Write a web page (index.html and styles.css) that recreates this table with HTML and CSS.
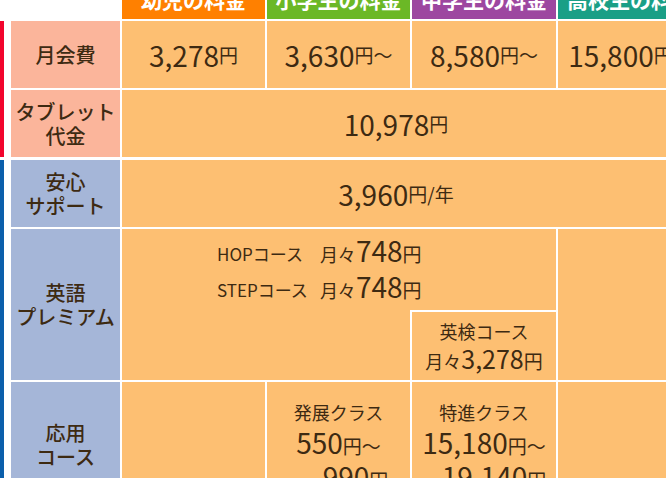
FILE: index.html
```html
<!DOCTYPE html>
<html lang="ja">
<head>
<meta charset="utf-8">
<link rel="stylesheet" href="styles.css">
</head>
<body>
<div class="sheet">
  <div class="head">
    <div class="hcell blank"></div>
    <div class="hcell h-orange">幼児の料金</div>
    <div class="hcell h-green">小学生の料金</div>
    <div class="hcell h-purple">中学生の料金</div>
    <div class="hcell h-teal">高校生の料金</div>
  </div>

  <div class="group">
    <div class="bar bar-red"></div>
    <div class="grid grid-a">
      <div class="label pink">月会費</div>
      <div class="cell"><span class="num">3,278</span><span class="yen">円</span></div>
      <div class="cell"><span class="num">3,630</span><span class="yen">円～</span></div>
      <div class="cell"><span class="num">8,580</span><span class="yen">円～</span></div>
      <div class="cell"><span class="num">15,800</span><span class="yen">円～</span></div>

      <div class="label pink">タブレット<br>代金</div>
      <div class="cell span-all"><span class="num">10,978</span><span class="yen">円</span></div>
    </div>
  </div>

  <div class="group group-b">
    <div class="bar bar-blue"></div>
    <div class="grid grid-b">
      <div class="label blue">安心<br>サポート</div>
      <div class="cell span-all"><span class="num">3,960</span><span class="yen">円/年</span></div>

      <div class="label blue">英語<br>プレミアム</div>
      <div class="premium">
        <div class="premium-top">
          <span class="course">HOPコース</span>
          <span class="price"><span class="small">月々</span><span class="num">748</span><span class="yen">円</span></span>
          <span class="course">STEPコース</span>
          <span class="price"><span class="small">月々</span><span class="num">748</span><span class="yen">円</span></span>
        </div>
        <div class="premium-bottom">
          <div class="eiken">
            <div class="line">英検コース</div>
            <div class="line"><span class="small">月々</span><span class="num mid">3,278</span><span class="yen">円</span></div>
          </div>
        </div>
      </div>
      <div class="cell"></div>

      <div class="label blue">応用<br>コース</div>
      <div class="cell"></div>
      <div class="cell top">
        <div class="stack">
          <div class="line">発展クラス</div>
          <div class="line"><span class="num">550</span><span class="yen">円～</span></div>
          <div class="line indent-a"><span class="num">990</span><span class="yen">円</span></div>
        </div>
      </div>
      <div class="cell top">
        <div class="stack">
          <div class="line">特進クラス</div>
          <div class="line"><span class="num">15,180</span><span class="yen">円～</span></div>
          <div class="line indent-b"><span class="num">19,140</span><span class="yen">円</span></div>
        </div>
      </div>
      <div class="cell"></div>
    </div>
  </div>
</div>
</body>
</html>
```

FILE: styles.css
```css
html, body {
  margin: 0;
  padding: 0;
  background: #ffffff;
  overflow: hidden;
}

body {
  font-family: "Noto Sans CJK JP", "Noto Sans", sans-serif;
  color: #3d2a12;
}

.sheet {
  width: max-content;
  margin-top: -22px;
  display: flex;
  flex-direction: column;
  gap: 2px;
}

.head {
  display: grid;
  grid-template-columns: 109px 143px 143px 144px 144px;
  column-gap: 2px;
  padding-left: 11px;
}

.hcell {
  height: 41px;
  display: flex;
  align-items: center;
  justify-content: center;
  color: #ffffff;
  font-weight: 700;
  font-size: 21px;
  white-space: nowrap;
  overflow: hidden;
}

.hcell.blank { background: transparent; }
.h-orange { background: #ff8000; }
.h-green { background: #6bb826; }
.h-purple { background: #9d47a0; }
.h-teal { background: #1a9f86; }

.group {
  display: flex;
  gap: 7px;
}

.group-b {
  margin-top: 1px;
}

.bar {
  width: 4px;
}

.bar-red { background: #f2052d; }
.bar-blue { background: #0b5fab; }

.grid {
  display: grid;
  grid-template-columns: 109px 143px 143px 144px 144px;
  gap: 2px;
}

.grid-a {
  grid-template-rows: 67px 67px;
}

.grid-b {
  grid-template-rows: 67px 151px 126px;
}

.label {
  display: flex;
  align-items: center;
  justify-content: center;
  text-align: center;
  font-size: 20px;
  font-weight: 500;
  line-height: 24px;
}

.pink { background: #fbb59b; }
.blue { background: #a5b6d8; }

.cell {
  background: #fdbf72;
  display: flex;
  align-items: center;
  justify-content: center;
  white-space: nowrap;
}

.cell.top {
  align-items: flex-start;
}

.span-all {
  grid-column: 2 / 6;
  padding-right: 32px;
}

.num {
  font-size: 28px;
  line-height: 1;
}

.num.mid {
  font-size: 25px;
}

.yen {
  font-size: 19px;
  line-height: 1;
}

.small {
  font-size: 18px;
}

.premium {
  grid-column: 2 / 5;
  background: #fdbf72;
  display: flex;
  flex-direction: column;
}

.premium-top {
  flex: 1;
  display: grid;
  grid-template-columns: max-content max-content;
  column-gap: 12px;
  align-content: start;
  padding: 7px 0 0 95px;
  line-height: 35px;
  font-size: 17px;
  white-space: nowrap;
}

.premium-bottom {
  display: flex;
  justify-content: flex-end;
}

.eiken {
  width: 144px;
  height: 68px;
  border-left: 2px solid #ffffff;
  border-top: 2px solid #ffffff;
  display: flex;
  flex-direction: column;
  align-items: center;
  justify-content: center;
  font-size: 18px;
  line-height: 30px;
  white-space: nowrap;
}

.stack {
  padding-top: 14px;
  display: flex;
  flex-direction: column;
  align-items: center;
  font-size: 18px;
  line-height: 32px;
}

.indent-a { padding-left: 34px; }
.indent-b { padding-left: 20px; }
```
